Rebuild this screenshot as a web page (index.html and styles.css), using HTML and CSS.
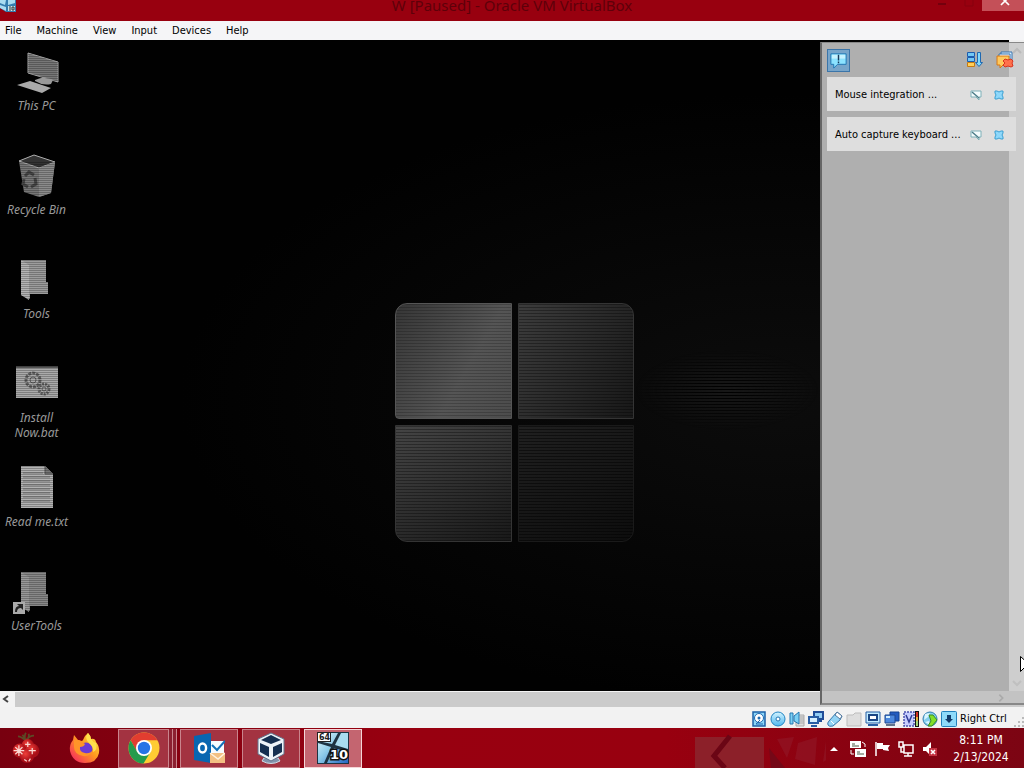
FILE: index.html
```html
<!DOCTYPE html>
<html lang="en">
<head>
<meta charset="utf-8">
<title>W [Paused] - Oracle VM VirtualBox</title>
<link rel="stylesheet" href="styles.css">
</head>
<body>
<svg class="defs" aria-hidden="true">
  <defs>
    <pattern id="scan" width="4" height="2" patternUnits="userSpaceOnUse"><rect width="4" height="1" fill="#000" opacity=".25"/></pattern>
    <linearGradient id="blue" x1="0" y1="0" x2="0" y2="1"><stop offset="0" stop-color="#d4f4ff"/><stop offset="1" stop-color="#4fb8f0"/></linearGradient>
    <linearGradient id="sky" x1="0" y1="0" x2="1" y2="1"><stop offset="0" stop-color="#e6f8fb"/><stop offset=".45" stop-color="#8ccbe8"/><stop offset="1" stop-color="#2466c4"/></linearGradient>
    <linearGradient id="fox" x1="1" y1="0" x2="0" y2="1"><stop offset="0" stop-color="#fff04a"/><stop offset=".45" stop-color="#ff9a1e"/><stop offset="1" stop-color="#f5156c"/></linearGradient>
    <radialGradient id="ball" cx=".4" cy=".35"><stop offset="0" stop-color="#f0403a"/><stop offset="1" stop-color="#a80f18"/></radialGradient>
    <symbol id="win10" viewBox="0 0 32 32">
      <rect width="32" height="32" fill="#1d3342"/>
      <path d="M1 1h20l-6 11L1 9zM1 11l13 4-7 16H1zM17 16l14 4v11H10z" fill="url(#sky)"/>
      <path d="M24 1h7v16l-13-4z" fill="#a9dcf0"/>
      <rect x=".5" y=".5" width="13" height="9" fill="#fff" stroke="#222"/>
      <text x="2" y="8" class="t64">64</text>
      <text x="13" y="27" class="t10">10</text>
    </symbol>
    <symbol id="pin" viewBox="0 0 12 12"><path d="M1 2h10v6H9v3L6 8H1z" fill="#f4fbfc" stroke="#7eb0b8"/><path d="M2 3l7 6" stroke="#4c7c88" stroke-width="1.500"/></symbol>
    <symbol id="cross" viewBox="0 0 12 12"><path d="M2 2h2l2 1 2-1h2v2L9 6l1 2v2H8L6 9l-2 1H2V8l1-2-1-2z" fill="#8fd8fa" stroke="#3a9fd2"/></symbol>
  </defs>
</svg>

<header class="titlebar">
  <svg class="title-icon" viewBox="0 0 16 12"><path d="M0 0h16v12H6L0 8z" fill="#347cae"/><path d="M0 0h6L5 5 0 3zM8 0h7v3L8 5zM0 5l6 2v4L0 8z" fill="#a9dcf0"/><path d="M8 6h7v5H8z" fill="#c9e6ed"/><path d="M10 6v5M12 7h2v3h-2z" stroke="#333" fill="none"/></svg>
  <h1 class="title">W [Paused] - Oracle VM VirtualBox</h1>
  <div class="window-buttons">
    <button class="wb" aria-label="Minimize"><svg viewBox="0 0 20 12"><path d="M5 4h8" stroke="#74000d" stroke-width="2"/></svg></button>
    <button class="wb" aria-label="Maximize"><svg viewBox="0 0 20 12"><path d="M6 0v6h8V0" stroke="#86000e" fill="none"/></svg></button>
    <button class="wb wb-close" aria-label="Close"><svg viewBox="0 0 20 12"><path d="M8-3l8 8m0-8L8 5" stroke="#fff" stroke-width="1.700"/></svg></button>
  </div>
</header>

<nav class="menubar">
  <button>File</button><button>Machine</button><button>View</button><button>Input</button><button>Devices</button><button>Help</button>
</nav>

<main class="machine">
  <div class="screen">
    <ul class="desktop">
      <li><a href="#"><svg viewBox="0 0 48 48"><path d="M16 3l30 9v20L16 23z" fill="#777" stroke="#a5a5a5"/><path d="M23 30q10-5 18 0l-2 4q-8 2-16-3z" fill="#999"/><path d="M5 35l13-4 21 7-9 5z" fill="#aaa"/><path d="M16 3l30 9v20L16 23z" fill="url(#scan)"/></svg><span>This PC</span></a></li>
      <li><a href="#"><svg viewBox="0 0 48 48"><path d="M7 7l15-6 21 7-4 31-12 4-15-5z" fill="#777"/><path d="M7 7l15-6 21 7-16 6z" fill="#333" stroke="#aaa"/><path d="M27 14l16-6-4 31-12 4z" fill="#8b8b8b"/><path d="M13 22l4-4 5 3m1 3l1 6-5 3m-3 0l-5-3 1-5" fill="none" stroke="#454545" stroke-width="3"/><path d="M7 7h36l-4 32-12 4-15-5z" fill="url(#scan)"/></svg><span>Recycle Bin</span></a></li>
      <li><a href="#"><svg viewBox="0 0 48 48"><path d="M9 2h25v22h2v12H18v5L9 37z" fill="#9d9d9d"/><path d="M9 2l8 5v35l-8-5z" fill="#b4b4b4"/><path d="M9 2h28v40H9z" fill="url(#scan)"/></svg><span>Tools</span></a></li>
      <li><a href="#"><svg viewBox="0 0 48 48"><path d="M4 4h42v32H4z" fill="#aaa"/><path d="M4 4h42v2H4z" fill="#555"/><g fill="none" stroke="#606060"><circle cx="21" cy="18" r="7" stroke-width="3" stroke-dasharray="3 1"/><circle cx="21" cy="18" r="3"/><circle cx="32" cy="27" r="5" stroke-width="3" stroke-dasharray="2 1"/><circle cx="32" cy="27" r="2"/></g><path d="M4 4h42v32H4z" fill="url(#scan)"/></svg><span>Install Now.bat</span></a></li>
      <li><a href="#"><svg viewBox="0 0 48 48"><path d="M9 0h24l8 8v34H9z" fill="#b2b2b2"/><path d="M33 0v8h8" fill="#777" stroke="#555"/><path d="M11 7h20M11 11h27M11 15h27M11 19h27M11 23h27M11 27h27M11 31h27M11 35h27" stroke="#777"/><path d="M9 0h24l8 8v34H9z" fill="url(#scan)"/></svg><span>Read me.txt</span></a></li>
      <li><a href="#"><svg viewBox="0 0 48 48"><path d="M9 2h25v22h2v12H18v5L9 37z" fill="#888"/><path d="M9 2l8 5v35l-8-5z" fill="#999"/><path d="M9 2h28v40H9z" fill="url(#scan)"/><path d="M1 32h12v12H1z" fill="#aaa"/><path d="M3 42q0-6 4-6l-2-2h6v6l-2-2q-4 0-4 4z" fill="#222"/></svg><span>UserTools</span></a></li>
    </ul>
    <div class="wallpaper"><div class="logo"><i class="pane p1"></i><i class="pane p2"></i><i class="pane p3"></i><i class="pane p4"></i></div></div>
    <div class="glow"></div>
  </div>
  <div class="vscroll"></div>
  <div class="hscroll"><button aria-label="Scroll left"><svg viewBox="0 0 14 16"><path d="M8 5L4 8l4 3" fill="none" stroke="#444" stroke-width="2"/></svg></button><div class="thumb"></div></div>

  <aside class="panel">
    <div class="panel-tools">
      <button class="tool active" aria-label="Notifications"><svg viewBox="0 0 22 22"><path d="M3 4h16v11h-9l-4 4v-4H3z" fill="#8be2ff" stroke="#1f74b2"/><path d="M4 5h14v4H4z" fill="#c5f2ff"/><path d="M11 5v6m0 1v2" stroke="#173a5c" stroke-width="1.500"/></svg></button>
      <button class="tool sort" aria-label="Sort order"><svg viewBox="0 0 18 18"><path d="M1.500 1.500h7v4h-7zM1.500 6.500h7v4h-7z" fill="#72c8f5" stroke="#1d5cae"/><path d="M1.500 11.500h7v4h-7z" fill="#ffd05a" stroke="#c57a13"/><path d="M11.500 1.500h3v10h2l-3.500 4-3.500-4h2z" fill="#80daff" stroke="#1f68b0"/></svg></button>
      <button class="tool" aria-label="Delete all"><svg viewBox="0 0 18 18"><path d="M5 1h11v9H5z" fill="#d8efff" stroke="#3470ad"/><path d="M3 3h11v9H3z" fill="#fff" stroke="#3470ad"/><path d="M1 5h12v9H7l-3 3v-3H1z" fill="#ffc95d" stroke="#d67715"/><path d="M9 8l3 1 3-1 2 2-1 2 1 3-2 1-3-1-3 1-2-2 2-2-2-2z" fill="#ff714c" stroke="#d8331e"/></svg></button>
    </div>
    <div class="note"><span>Mouse integration ...</span><button aria-label="Do not show again"><svg><use href="#pin"/></svg></button><button aria-label="Dismiss"><svg><use href="#cross"/></svg></button></div>
    <div class="note"><span>Auto capture keyboard ...</span><button aria-label="Do not show again"><svg><use href="#pin"/></svg></button><button aria-label="Dismiss"><svg><use href="#cross"/></svg></button></div>
    <svg class="scroll-right" viewBox="0 0 10 12"><path d="M3 2l4 4-4 4" fill="none" stroke="#aaa" stroke-width="2"/></svg>
    <svg class="scroll-up" viewBox="0 0 12 8"><path d="M2 6l4-4 4 4" fill="none" stroke="#bbb" stroke-width="2"/></svg>
    <svg class="scroll-down" viewBox="0 0 12 8"><path d="M2 2l4 4 4-4" fill="none" stroke="#c0c0c0" stroke-width="2"/></svg>
  </aside>
</main>

<footer class="statusbar">
  <svg viewBox="0 0 16 16"><path d="M2 1h12v14H2z" fill="#8cd6f8" stroke="#1c62a8" stroke-width="1.500"/><circle cx="8" cy="7" r="4.500" fill="#fff" stroke="#1e69b0"/><circle cx="8" cy="7" r="1.500" fill="#1e69b0"/><path d="M9 9l-4 4h7" fill="none" stroke="#1e69b0"/></svg>
  <svg viewBox="0 0 16 16"><circle cx="8" cy="8" r="7" fill="url(#blue)" stroke="#2386c4"/><circle cx="8" cy="8" r="2" fill="#fff" stroke="#2476b4"/></svg>
  <svg viewBox="0 0 16 16"><path d="M7 4h8v11H7z" fill="#ddd" stroke="#aaa"/><path d="M1 2h3v11H1zM5 5l5-4v12l-5-3z" fill="#7bd0f5" stroke="#2476b0"/><path d="M12 5v8M14 5v8" stroke="#aaa"/></svg>
  <svg viewBox="0 0 16 16"><path d="M6 1h9v7H6z" fill="#91cdf4" stroke="#204d98" stroke-width="2"/><path d="M9 10h5" stroke="#204d98" stroke-width="2"/><path d="M1 6h9v6H1z" fill="#d5efff" stroke="#285da4" stroke-width="2"/><path d="M3 15h6" stroke="#285da4" stroke-width="2"/></svg>
  <svg viewBox="0 0 16 16"><path d="M10 1l5 4-2 4-7 6q-4 1-5-1-1-2 1-4z" fill="#93d4f5" stroke="#3478ae"/><path d="M10 1l5 4-2 3-5-4z" fill="#fff" stroke="#56799d"/><path d="M4 10l3 3" stroke="#fff"/></svg>
  <svg viewBox="0 0 16 16"><path d="M1 4h6l2-2h6v13H1z" fill="#dedede" stroke="#bdbdbd"/></svg>
  <svg viewBox="0 0 16 16"><path d="M1 1h14v11H1z" fill="#c4ecff" stroke="#275fa5"/><path d="M4 4h8v5H4z" fill="#fff" stroke="#1a4685" stroke-width="2"/><path d="M3 14h10" stroke="#275fa5" stroke-width="2"/></svg>
  <svg viewBox="0 0 16 16"><path d="M6 1h9v9H6z" fill="#225bc0" stroke="#12408e"/><path d="M1 4h10v8H1z" fill="#4c88dd" stroke="#1d4690"/><path d="M2 14h9" stroke="#60748c" stroke-width="2"/><path d="M2 5h4v2H2z" fill="#d5f0ff"/></svg>
  <svg viewBox="0 0 16 16"><path d="M1 1h10v14H1z" fill="#c7ceff" stroke="#4b53af" stroke-width="1.500" stroke-dasharray="2 1"/><path d="M3 4l3 7 3-7" fill="none" stroke="#303b96" stroke-width="1.500"/><path d="M12 0h4v16h-4z" fill="#111"/><path d="M13 1h2v5h-2z" fill="#d33022"/><path d="M13 6h2v4h-2z" fill="#e8b23d"/><path d="M13 10h2v5h-2z" fill="#a1d477"/></svg>
  <svg viewBox="0 0 16 16"><circle cx="8" cy="8" r="7" fill="#85cfee" stroke="#337eae"/><path d="M3 3l5-1-2 4-4 3M3 11l4-1 1 4" fill="#d9f5ff"/><path d="M7 4h4l4 5-5 6H6l3-5z" fill="#83df28" stroke="#398b25"/></svg>
  <svg viewBox="0 0 16 16"><rect x=".5" y=".5" width="15" height="15" rx="1" fill="#8edafa" stroke="#2281bd"/><path d="M6 4h4v4h2l-4 4-4-4h2z" fill="#123b6b"/></svg>
  <span class="hostkey">Right Ctrl</span>
  <svg class="grip" viewBox="0 0 10 16"><path d="M8 6h2v2H8zM4 10h2v2H4zM8 10h2v2H8zM0 14h2v2H0zM4 14h2v2H4zM8 14h2v2H8z" fill="#bbb"/></svg>
</footer>

<div class="taskbar">
  <button class="task start" aria-label="Start"><svg viewBox="0 0 32 36"><path d="M15 9q-5-4-8-4m8 4q-1-6 1-8m0 8q4-5 9-5M16 10q-1-3-4-7m5 7q3-5 2-8" stroke="#5c4a26" stroke-width="2" fill="none"/><circle cx="18" cy="15" r="7" fill="url(#ball)"/><circle cx="9" cy="21" r="8" fill="url(#ball)"/><circle cx="23" cy="21" r="8" fill="url(#ball)"/><circle cx="17" cy="27" r="8" fill="url(#ball)"/><path d="M8 15v12M2 21h12M4 17l8 8m0-8l-8 8M18 11v6m-3-3h6M23 18v7m-4-4h8M14 31l3 2m4-3l-2 3" stroke="#fbd9d3" stroke-width="1.400"/></svg></button>
  <button class="task firefox" aria-label="Firefox"><svg viewBox="0 0 32 32"><path d="M19 1q3 3 3 6 4-1 5 3 4 5 3 11-2 10-14 10T1 19Q0 13 4 8l1-5 4 5 4 1 1-1q1-4 5-7z" fill="url(#fox)"/><circle cx="17" cy="17" r="6.500" fill="#6c3bd5"/><path d="M5 8q5-1 8 2l3 2q-1 3-5 3-1 5 5 6 5 1 8-3-2 7-10 6-9-2-9-9z" fill="#ff9429"/><path d="M19 1q-4 5 1 10 5 4 4 9 5-2 3-9-3-1-5-4 0-3-3-6z" fill="#ffe04c"/></svg></button>
  <button class="task open stack" aria-label="Chrome"><svg viewBox="0 0 32 32"><circle cx="16" cy="16" r="15.500" fill="#fc3"/><path d="M2.600 8.200A15.500 15.500 0 0129.400 8.200H16L9 20z" fill="#e23d30"/><path d="M2.600 8.200L9.300 20l6.700 4-4 7A15.500 15.500 0 012.600 8.200z" fill="#259b4c"/><path d="M9.300 20L16 24l6.500-4-7 11.500q-4 0-7-2z" fill="#259b4c"/><circle cx="16" cy="16" r="8" fill="#fff"/><circle cx="16" cy="16" r="6.200" fill="#2674e6"/></svg></button>
  <button class="task open" aria-label="Outlook"><svg viewBox="0 0 32 32"><path d="M1 4l17-3v30L1 28z" fill="#0866b1"/><ellipse cx="9.500" cy="16" rx="3.600" ry="4.500" fill="none" stroke="#fff" stroke-width="2.400"/><path d="M18 9h13v12H18z" fill="#f7fbff"/><path d="M19 13l5 5 8-9" fill="none" stroke="#1470b8" stroke-width="2"/><path d="M17 21h15v10H17z" fill="#f3c083"/><path d="M17 21l8 6 7-6" fill="none" stroke="#fff1de" stroke-width="1.500"/></svg></button>
  <button class="task open" aria-label="VirtualBox"><svg viewBox="0 0 32 32"><path d="M9 26q7-4 14 0l2 3q-9 5-18 0z" fill="#8294ad" stroke="#d1dbe5"/><path d="M16 1l13 6v15l-13 7-13-7V7z" fill="#edf3f8" stroke="#62728a"/><path d="M16 3l10 5-10 4L6 8zM5 11l9 4v10l-9-5zM27 11l-9 4v10l9-5z" fill="#152f50"/></svg></button>
  <button class="task open current" aria-label="Windows 10 virtual machine"><svg><use href="#win10"/></svg></button>
  <div class="deco"><svg viewBox="0 0 150 40"><path d="M0 9h69v31H0z" fill="#8c2029"/><path d="M35 8L19 28l11 12" fill="none" stroke="#6b0615" stroke-width="5"/><path d="M82 11l17-2-7 21zM103 15l19-6-2 28-20-6zM131 13l12 12-15 9z" fill="#921c2b" opacity=".5"/><path d="M74 20l16 20H76z" fill="#750817"/></svg></div>
  <div class="tray">
    <svg viewBox="0 0 16 16"><path d="M4 10l4-4 4 4z" fill="#fff"/></svg>
    <svg viewBox="0 0 16 16"><path d="M0 0h11v7H0zM5 8h11v8H5z" fill="#fff"/><path d="M2 3h3M2 5h7M7 11h3M7 13h7" stroke="#4b5b45"/><path d="M12 1l3 2v3M1 9v4h3" stroke="#fff" fill="none"/></svg>
    <svg viewBox="0 0 16 16"><path d="M2 1v14" stroke="#fff" stroke-width="1.500"/><path d="M3 2h6v2h7l-2 3 1 3-6-1V8H3z" fill="#fff"/></svg>
    <svg viewBox="0 0 16 16"><path d="M6 4h9v8H6zM10 12v3m-4 0h8M3 6v5h3M1 1h4v5H1z" fill="none" stroke="#fff" stroke-width="1.500"/></svg>
    <svg viewBox="0 0 16 16"><path d="M1 6h3l5-5v14l-5-5H1z" fill="#fff"/><path d="M7 7h8v8H7z" fill="#c33140"/><path d="M9 9l4 4m0-4l-4 4" stroke="#fff" stroke-width="1.600"/></svg>
  </div>
  <time class="clock"><span>8:11 PM</span><span>2/13/2024</span></time>
</div>
<svg class="cursor" viewBox="0 0 12 18"><path d="M.5.500v15l4-4 3 6 2-1-3-6h5z" fill="#fff" stroke="#000"/></svg>
</body>
</html>
```

FILE: styles.css
```css
* { box-sizing: border-box; }
body {
  margin: 0;
  height: 100vh;
  display: flex;
  flex-direction: column;
  overflow: hidden;
  position: relative;
  font: 11px/16px "DejaVu Sans Condensed", "DejaVu Sans", sans-serif;
  color: #000;
  background: #f0f0f0;
}
button { border: 0; padding: 0; margin: 0; background: none; font: inherit; color: inherit; }
svg { display: block; flex: none; }
.defs { position: absolute; width: 0; height: 0; }
.t64 { font: bold 8px "DejaVu Sans", sans-serif; fill: #222; }
.t10 { font: bold 13px "DejaVu Sans", sans-serif; fill: #fff; stroke: #111; stroke-width: 3px; paint-order: stroke; }

.titlebar {
  flex: none;
  height: 21px;
  display: grid;
  grid-template-columns: 1fr auto 1fr;
  align-items: start;
  background: #98000f;
}
.title-icon { width: 16px; height: 12px; }
.title { margin: -5px 0 0; font: 15px/20px "Noto Sans", sans-serif; color: #5e000a; }
.window-buttons { justify-self: end; display: flex; }
.wb { width: 26px; height: 11px; overflow: hidden; }
.wb svg { width: 20px; height: 12px; margin: 0 auto; }
.wb-close { width: 42px; background: #c45058; }

.menubar { flex: none; height: 19px; display: flex; gap: 15px; padding: 1px 0 0 5px; background: #f5f5f7; line-height: 18px; }

.machine {
  flex: 1;
  min-height: 0;
  position: relative;
  display: grid;
  grid-template-columns: 1fr 15px;
  grid-template-rows: 1fr 16px;
}
.screen { position: relative; display: grid; grid-template-columns: 73px 1fr; background: #010101; overflow: hidden; }
.desktop { list-style: none; margin: 0; padding: 10px 0 0; font: italic 12px/15px "Noto Sans", sans-serif; color: #999; text-align: center; }
.desktop li { height: 104px; }
.desktop a { display: block; color: inherit; text-decoration: none; }
.desktop svg { width: 48px; height: 48px; margin: 0 12px; }
.desktop span { display: block; padding: 0 4px; }
.wallpaper { display: grid; place-items: center; padding: 113px 53px 0 0; background: radial-gradient(ellipse at 75% 55%, #0c0c0c, #010101 60%); }
.logo { width: 239px; height: 239px; display: grid; grid-template-columns: 1fr 1fr; gap: 6px; }
.pane { display: block; border: 1px solid #343434; }
.p1 { border-radius: 12px 0 0 4px; background: repeating-linear-gradient(#0003 0 1px, #0000 1px 3px), linear-gradient(120deg, #363636, #555 60%, #4c4c4c); border-color: #555; }
.p2 { border-radius: 0 12px 0 0; background: repeating-linear-gradient(#0005 0 1px, #0000 1px 3px), linear-gradient(120deg, #3c3c3c, #181818); }
.p3 { border-radius: 0 0 0 12px; background: repeating-linear-gradient(#0005 0 1px, #0000 1px 3px), linear-gradient(150deg, #454545, #191919); }
.p4 { border-radius: 0 0 12px 0; background: repeating-linear-gradient(#0007 0 1px, #0000 1px 3px), linear-gradient(150deg, #202020, #0d0d0d); border-color: #1a1a1a; }
.glow { position: absolute; left: 635px; right: 190px; top: 310px; height: 80px; background: repeating-linear-gradient(#000 0 1px, #181818 1px 3px); mask-image: radial-gradient(ellipse, #000, #0000 70%); }
.vscroll { background: #efefef; }
.hscroll { grid-column: 1 / 3; display: flex; background: #f3f3f3; }
.hscroll button { width: 15px; }
.hscroll svg { width: 14px; height: 16px; }
.thumb { flex: 1; margin-top: 1px; background: #cbcbcb; }

.panel {
  position: absolute;
  left: calc(100% - 204px);
  right: 0;
  top: 2px;
  bottom: 2px;
  padding: 5px 8px 0 5px;
  border-left: 2px solid #666;
  border-top: 1px solid #888;
  border-bottom: 2px solid #888;
  background: linear-gradient(90deg, #afafaf calc(100% - 15px), #cecece calc(100% - 15px));
}
.panel::after { content: ""; position: absolute; left: 0; right: 0; bottom: 0; height: 12px; background: #c3c3c3; }
.panel-tools { display: flex; align-items: center; gap: 12px; height: 24px; margin: 0 2px 5px 0; }
.tool svg { width: 18px; height: 18px; }
.active { width: 23px; height: 23px; border: 1px solid #3b75a9; background: #77a5ca; }
.active svg { width: 21px; height: 21px; }
.sort { margin-left: auto; }
.note { display: flex; align-items: center; gap: 11px; height: 34px; margin-bottom: 6px; padding: 1px 11px 0 8px; background: #dedede; }
.note span { flex: 1; min-width: 0; white-space: nowrap; }
.note svg { width: 12px; height: 12px; }
.scroll-right, .scroll-up, .scroll-down { position: absolute; z-index: 1; width: 12px; height: 10px; }
.scroll-right { right: 17px; bottom: 0; }
.scroll-up { right: 1px; top: 3px; }
.scroll-down { right: 1px; bottom: 15px; }

.statusbar { flex: none; height: 21px; display: flex; align-items: center; justify-content: flex-end; gap: 3px; background: #f2f2f2; padding-top: 2px; }
.statusbar svg { width: 16px; height: 16px; }
.hostkey { width: 51px; white-space: nowrap; }
.statusbar .grip { width: 10px; }

.taskbar { flex: none; height: 40px; display: flex; align-items: center; background: linear-gradient(90deg, #78000f, #980010 40%, #98000f 65%, #7c0513); color: #fff; }
.task { height: 40px; width: 58px; margin-right: 4px; display: grid; place-items: center; }
.task svg { width: 32px; height: 32px; }
.start { width: 52px; margin-right: 3px; }
.firefox { width: 60px; margin-right: 3px; }
.open { height: 39px; border: 1px solid #c9858d; background: #a33341; }
.stack { width: 51px; margin-right: 11px; box-shadow: 3px 0 #8c2030, 4px 0 #c9858d, 7px 0 #8c2030, 8px 0 #c9858d; }
.current { background: #c46570; border-color: #f4d5d7; }
.deco { flex: 1; height: 40px; display: flex; justify-content: flex-end; overflow: hidden; }
.deco svg { width: 150px; height: 40px; margin-right: -19px; }
.tray { display: flex; gap: 8px; padding-top: 2px; }
.tray svg { width: 16px; height: 16px; }
.clock { width: 86px; display: flex; flex-direction: column; align-items: center; padding-top: 2px; line-height: 17px; font-size: 12px; }

.cursor { position: absolute; left: calc(100% - 4px); top: 656px; width: 12px; height: 18px; }
```
